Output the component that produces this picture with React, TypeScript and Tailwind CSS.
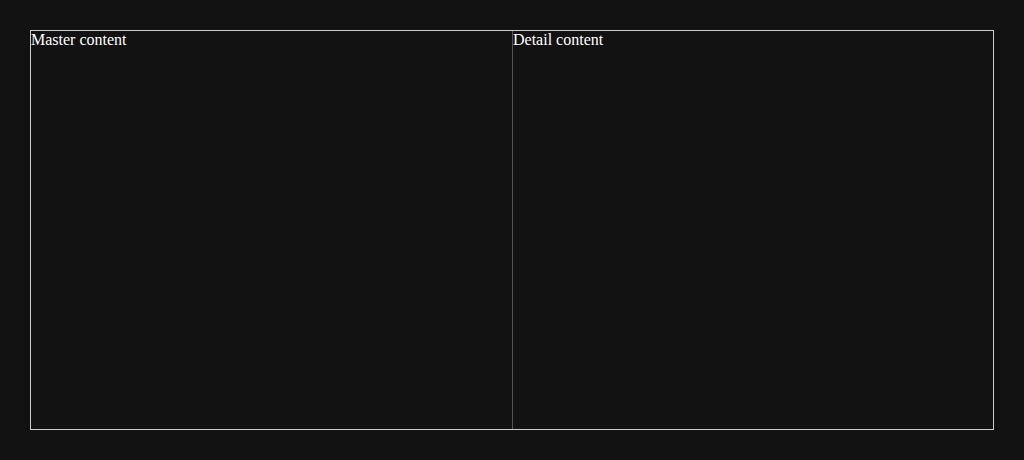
export default function App() {
  return (
    <div className="min-h-[460px] bg-[#121212] p-[30px] font-['Liberation_Serif',serif] text-[16px] leading-[normal] text-white">
      <div className="grid h-[400px] grid-cols-2 border border-[#cccccc]">
        <div>Master content</div>
        <div className="border-l border-[#555555]">Detail content</div>
      </div>
    </div>
  );
}
